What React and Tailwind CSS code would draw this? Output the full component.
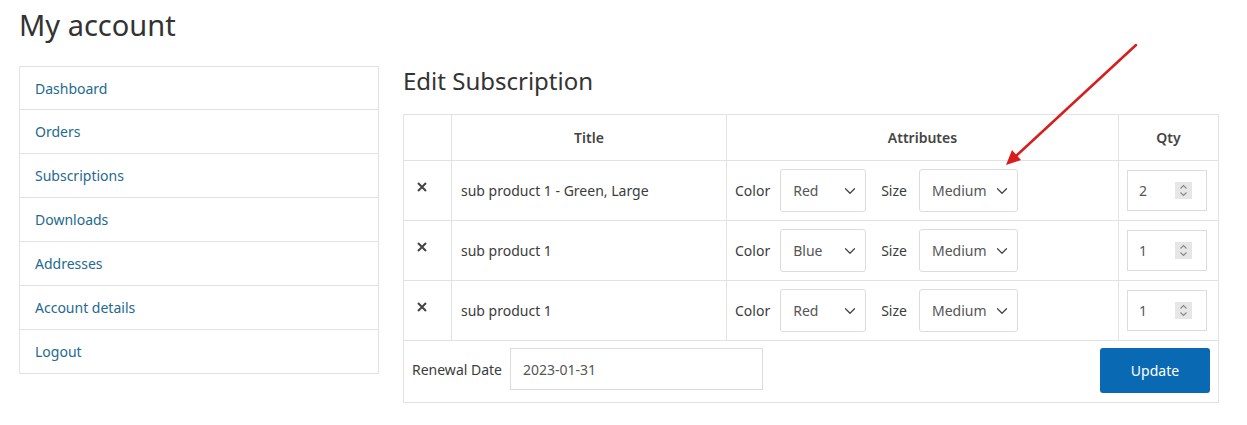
import { ChevronDown } from 'lucide-react';

const menu = ['Dashboard', 'Orders', 'Subscriptions', 'Downloads', 'Addresses', 'Account details', 'Logout'];

const rows = [
  { title: 'sub product 1 - Green, Large', color: 'Red', size: 'Medium', qty: 2 },
  { title: 'sub product 1', color: 'Blue', size: 'Medium', qty: 1 },
  { title: 'sub product 1', color: 'Red', size: 'Medium', qty: 1 },
];

const FakeSelect = ({ value, width }) => (
  <div
    className={`${width} h-[43px] flex items-center justify-between pl-[12px] pr-[6px] border border-[#dcdcdc] rounded-[3px] bg-white text-[#555]`}
  >
    <span>{value}</span>
    <ChevronDown size={18} strokeWidth={1.6} className="text-[#444]" />
  </div>
);

const QtyInput = ({ value }) => (
  <div className="w-[80px] h-[41px] flex items-center justify-between pl-[11px] pr-[14px] border border-[#dcdcdc] bg-white text-[#555]">
    <span>{value}</span>
    <div className="w-[17px] h-[17px] bg-[#e6e6e6] flex items-center justify-center">
      <svg width="9" height="13" viewBox="0 0 9 13" fill="none" stroke="#888" strokeWidth="1.1">
        <path d="M1.5 4.5 L4.5 1.5 L7.5 4.5" />
        <path d="M1.5 8.5 L4.5 11.5 L7.5 8.5" />
      </svg>
    </div>
  </div>
);

export default function App() {
  return (
    <div className="relative w-[1247px] h-[425px] bg-white text-[14px] text-[#3c3c3c] font-['Noto_Sans',sans-serif]">
      <div className="px-[19px] pt-[7px]">
        <h1 className="text-[29px] leading-[36px] text-[#333]">My account</h1>

        <div className="flex gap-[24px] mt-[23px]">
          {/* Sidebar */}
          <nav className="w-[360px] shrink-0 self-start border border-[#e2e2e2]">
            {menu.map((item, i) => (
              <div
                key={item}
                className={`flex items-center px-[15px] text-[#24698f] ${i > 0 ? 'h-[44px] border-t border-[#e2e2e2]' : 'h-[42px]'}`}
              >
                {item}
              </div>
            ))}
          </nav>

          {/* Content */}
          <div>
            <h2 className="text-[24px] leading-[30px] text-[#333]">Edit Subscription</h2>

            <table className="mt-[18px] w-[815px] border-collapse border border-[#e2e2e2] table-fixed">
              <colgroup>
                <col className="w-[48px]" />
                <col className="w-[275px]" />
                <col className="w-[392px]" />
                <col className="w-[100px]" />
              </colgroup>
              <thead>
                <tr className="h-[46px]">
                  <th className="border border-[#e2e2e2]"></th>
                  <th className="border border-[#e2e2e2] font-semibold text-[#444]">Title</th>
                  <th className="border border-[#e2e2e2] font-semibold text-[#444]">Attributes</th>
                  <th className="border border-[#e2e2e2] font-semibold text-[#444]">Qty</th>
                </tr>
              </thead>
              <tbody>
                {rows.map((row, i) => (
                  <tr key={i} className="h-[60px]">
                    <td className="border border-[#e2e2e2] align-middle">
                      <svg width="10" height="10" viewBox="0 0 10 10" className="ml-[13px] -mt-[8px]" stroke="#444" strokeWidth="2">
                        <path d="M1 1 L9 9 M9 1 L1 9" />
                      </svg>
                    </td>
                    <td className="border border-[#e2e2e2] px-[9px]">{row.title}</td>
                    <td className="border border-[#e2e2e2] px-[8px]">
                      <div className="flex items-center">
                        <span className="mr-[10px]">Color</span>
                        <FakeSelect value={row.color} width="w-[86px]" />
                        <span className="ml-[15px] mr-[12px]">Size</span>
                        <FakeSelect value={row.size} width="w-[99px]" />
                      </div>
                    </td>
                    <td className="border border-[#e2e2e2] px-[8px]">
                      <QtyInput value={row.qty} />
                    </td>
                  </tr>
                ))}
                <tr className="h-[62px]">
                  <td colSpan={4} className="border border-[#e2e2e2] px-[8px] pt-[7px] align-top">
                    <div className="flex items-start justify-between">
                      <div className="flex items-center">
                        <span className="mr-[8px]">Renewal Date</span>
                        <div className="w-[253px] h-[42px] flex items-center px-[12px] border border-[#dcdcdc] text-[#555]">
                          2023-01-31
                        </div>
                      </div>
                      <button className="w-[110px] h-[45px] bg-[#0a69b3] text-white rounded-[3px] text-[14px]">
                        Update
                      </button>
                    </div>
                  </td>
                </tr>
              </tbody>
            </table>
          </div>
        </div>
      </div>

      {/* Red annotation arrow */}
      <svg className="absolute left-0 top-0 pointer-events-none" width="1247" height="425">
        <line x1="1136" y1="45" x2="1016" y2="156" stroke="#d91c1c" strokeWidth="2.5" strokeLinecap="round" />
        <path d="M1006 165 L1012 150 L1021 160 Z" fill="#d91c1c" />
      </svg>
    </div>
  );
}
